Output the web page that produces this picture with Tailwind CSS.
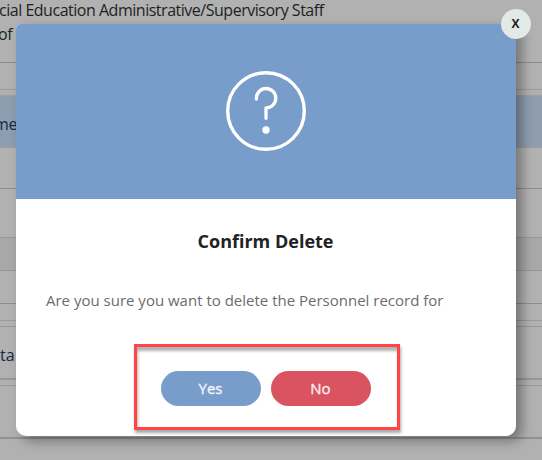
<!DOCTYPE html>
<html lang="en">
<head>
<meta charset="utf-8">
<title>Confirm Delete</title>
<script src="https://cdn.jsdelivr.net/npm/@tailwindcss/browser@4"></script>
</head>
<body class="relative h-[460px] w-[542px] overflow-hidden bg-[#b1b1b1] font-['Open_Sans',sans-serif]">
<main class="flex h-[460px] flex-col whitespace-nowrap text-[16px] leading-6 tracking-[-0.48px] text-[#1d1f21]">
  <div class="h-[63px] border-b border-[#8d8d8d]">
    <p class="-ml-px mt-[-2px]">cial Education Administrative/Supervisory Staff</p>
    <p class="-ml-[2px]">of</p>
  </div>
  <div class="h-[27px] border-b border-[#9b9b9b]"></div>
  <div class="h-[5px]"></div>
  <div class="flex h-[53px] items-center border-y border-[#a09f9f] bg-[#8f9db1] pt-[4px] text-[#142947]"><span class="-ml-[6px] tracking-[-0.3px]">me</span></div>
  <div class="h-[41px] border-b border-[#8d8d8d]"></div>
  <div class="h-[49px] border-b border-[#999]"></div>
  <div class="h-[33px] border-b border-[#999] bg-[#a8a8a8]"></div>
  <div class="h-[33px] border-b border-[#8d8d8d]"></div>
  <div class="h-[17px] border-b border-[#999]"></div>
  <div class="h-[6px] border-b border-[#95989c]"></div>
  <div class="flex h-[53px] items-center border-b-2 border-[#95979d] pt-[4px] text-[#142947]"><span class="tracking-normal">ta</span></div>
  <div class="h-[6px] border-b border-[#999]"></div>
  <div class="h-[53px] border-b-2 border-[#909296]"></div>
</main>

<section role="dialog" class="absolute left-4 top-6 flex h-[412px] w-[500px] flex-col rounded-t-[5px] rounded-b-[10px] bg-white shadow-[6px_5px_12px_rgba(0,0,0,0.35)]">
  <header class="flex h-[175px] items-center justify-center rounded-t-[5px] bg-[#789dca] pb-[2px]">
    <svg class="size-20" viewBox="0 0 80 80" fill="none" stroke="white" stroke-linecap="round" stroke-linejoin="round">
      <circle cx="40" cy="40" r="38.3" stroke-width="3.4"/>
      <path d="M30.4 28V27A9.7 9.7 0 1 1 40 36.9V47.3" stroke-width="3.3"/>
      <circle cx="40" cy="59" r="3.7" fill="white" stroke="none"/>
    </svg>
  </header>
  <h1 class="mt-[30px] pr-px text-center text-[18px] font-bold leading-6 text-[#222]">Confirm Delete</h1>
  <p class="ml-[30px] mt-[37px] whitespace-nowrap text-[15px] leading-5 text-[#6c6c6c]">Are you sure you want to delete the Personnel record for</p>
  <div class="mt-[34px] flex h-[86px] w-[266px] translate-x-[118px] justify-center gap-[10px] border-3 border-[#ff4545] pr-[2px] pt-6 shadow-[1px_3px_3px_rgba(0,0,0,0.35),inset_1px_4px_3px_rgba(0,0,0,0.3)]">
    <button class="h-[35px] w-[100px] rounded-full bg-[#789dca] pr-px text-[15px] text-[#f2f5fa] [-webkit-text-stroke:0.35px_#f2f5fa]">Yes</button>
    <button class="h-[35px] w-[100px] rounded-full bg-[#d95361] pr-px text-[15px] text-[#fbeef0] [-webkit-text-stroke:0.35px_#fbeef0]">No</button>
  </div>
  <button class="absolute -right-[15px] -top-[15px] size-[30px] rounded-full bg-[#e3e9e6] pr-px text-[12px] font-bold text-[#222]">X</button>
</section>
</body>
</html>
